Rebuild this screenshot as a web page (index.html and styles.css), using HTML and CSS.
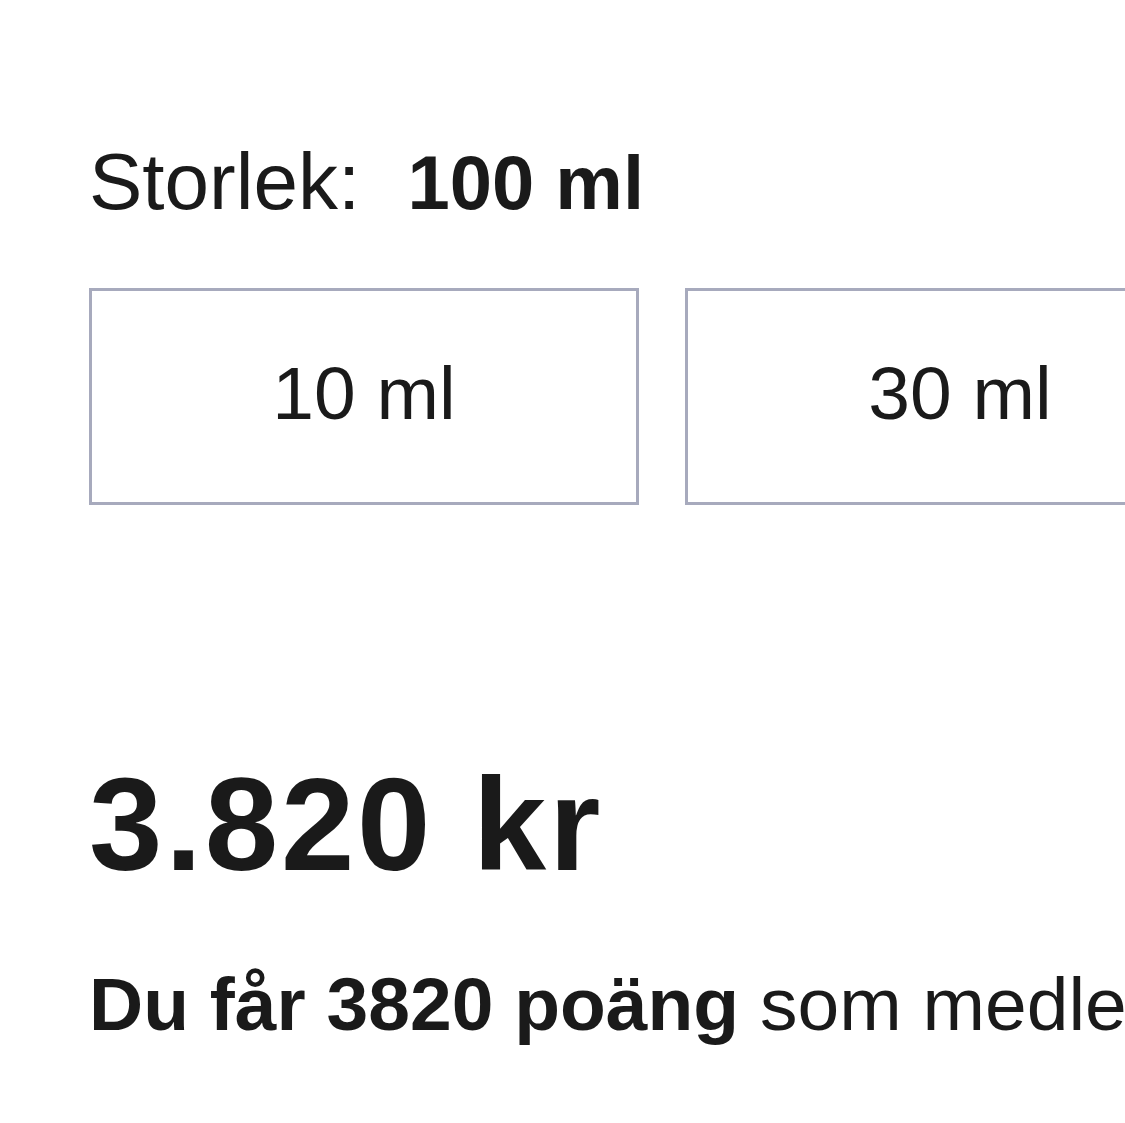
FILE: index.html
```html
<!DOCTYPE html>
<html lang="sv">
<head>
<meta charset="utf-8">
<title>Storlek</title>
<link rel="stylesheet" href="styles.css">
</head>
<body>
<main class="product">
  <div class="size-label">Storlek: <strong class="size-value">100 ml</strong></div>
  <div class="options">
    <button class="option">10 ml</button>
    <button class="option">30 ml</button>
    <button class="option">50 ml</button>
  </div>
  <div class="price">3.820 kr</div>
  <p class="points"><strong>Du får 3820 poäng</strong> som medlem</p>
</main>
</body>
</html>
```

FILE: styles.css
```css
html, body {
  margin: 0;
  padding: 0;
  background: #ffffff;
  overflow: hidden;
}
body {
  font-family: "Liberation Sans", Arial, sans-serif;
  color: #1a1a1a;
  width: 1125px;
  height: 1123px;
}
.product {
  padding: 137px 0 0 89px;
  white-space: nowrap;
  overflow: hidden;
}
.size-label {
  font-size: 80px;
  line-height: 90px;
}
.size-value {
  font-weight: 700;
  font-size: 76px;
  margin-left: 25px;
}
.options {
  display: flex;
  gap: 46px;
  margin-top: 60px;
}
.option {
  flex: 0 0 auto;
  width: 550px;
  height: 217px;
  box-sizing: border-box;
  border: 3px solid #a7aabd;
  background: #ffffff;
  font-family: inherit;
  font-size: 75px;
  line-height: 85px;
  color: #1a1a1a;
  padding: 0 0 6px 0;
  margin: 0;
  display: flex;
  align-items: center;
  justify-content: center;
}
.price {
  margin-top: 250px;
  font-size: 132px;
  font-weight: 700;
  line-height: 140px;
  letter-spacing: 2.8px;
}
.points {
  margin: 64px 0 0 0;
  font-size: 75px;
  line-height: 90px;
}
.points strong {
  font-weight: 700;
}
```
